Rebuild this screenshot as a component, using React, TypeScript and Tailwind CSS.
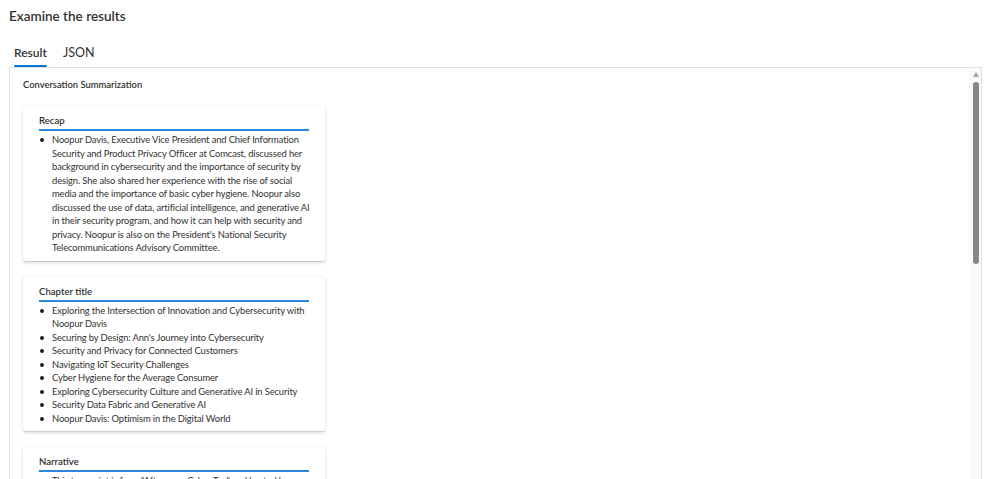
const recap = [
  [
    "Noopur Davis, Executive Vice President and Chief Information",
    "Security and Product Privacy Officer at Comcast, discussed her",
    "background in cybersecurity and the importance of security by",
    "design. She also shared her experience with the rise of social",
    "media and the importance of basic cyber hygiene. Noopur also",
    "discussed the use of data, artificial intelligence, and generative AI",
    "in their security program, and how it can help with security and",
    "privacy. Noopur is also on the President's National Security",
    "Telecommunications Advisory Committee.",
  ],
];

const chapters = [
  ["Exploring the Intersection of Innovation and Cybersecurity with", "Noopur Davis"],
  ["Securing by Design: Ann's Journey into Cybersecurity"],
  ["Security and Privacy for Connected Customers"],
  ["Navigating IoT Security Challenges"],
  ["Cyber Hygiene for the Average Consumer"],
  ["Exploring Cybersecurity Culture and Generative AI in Security"],
  ["Security Data Fabric and Generative AI"],
  ["Noopur Davis: Optimism in the Digital World"],
];

const narrative = [
  [
    'This transcript is from "Afternoon Cyber Tea" and hosted by',
    "Ann Johnson, featuring Noopur Davis, who discusses her journey",
    "into cybersecurity and the importance of security by design.",
  ],
];

function Card({ title, items }: { title: string; items: string[][] }) {
  return (
    <div className="w-[302px] shrink-0 rounded-[2px] bg-white px-4 pt-[8px] pb-[6px] shadow-[0_1.6px_3.6px_rgba(0,0,0,0.13),0_0.3px_0.9px_rgba(0,0,0,0.11)]">
      <h3 className="border-b-2 border-[#2b88d8] pb-[1px] text-[9.6px] font-semibold leading-[14px] text-[#323130]">
        {title}
      </h3>
      <ul className="mt-[2px] flex flex-col text-[9.4px] leading-[13.5px] tracking-[-0.12px] text-[#323130]">
        {items.map((lines) => (
          <li key={lines[0]} className="flex whitespace-nowrap">
            <span className="ml-[1px] mr-[8px] mt-[5px] h-[4px] w-[4px] shrink-0 rounded-full bg-[#201f1e]" />
            <span>
              {lines.map((l, i) => (
                <span key={l}>
                  {i > 0 && <br />}
                  {l}
                </span>
              ))}
            </span>
          </li>
        ))}
      </ul>
    </div>
  );
}

export default function App() {
  return (
    <div
      className="h-[479px] overflow-hidden bg-white text-[#323130]"
      style={{ fontFamily: 'Lato, "Open Sans", sans-serif' }}
    >
      <div className="px-[9px] pt-[6px]">
        <h1 className="text-[13.5px] font-semibold leading-[20px] text-[#323130]">Examine the results</h1>

        <div className="mt-[18px] flex gap-4 pl-[5px]">
          <div className="flex flex-col items-center">
            <span className="text-[12px] font-semibold leading-[18px] text-[#323130]">Result</span>
            <span className="mt-[3px] h-[2px] w-full rounded-full bg-[#0078d4]" />
          </div>
          <div className="flex flex-col">
            <span className="text-[12.5px] leading-[18px] text-[#323130]">JSON</span>
          </div>
        </div>

        <div className="flex h-[430px] w-[973px] border border-[#e1dfdd]">
          <div className="flex flex-1 flex-col overflow-hidden pl-[13px] pt-[9px]">
            <h2 className="text-[9.4px] font-semibold leading-[16px] text-[#323130]">Conversation Summarization</h2>
            <div className="mt-[13px] flex flex-col gap-4">
              <Card title="Recap" items={recap} />
              <Card title="Chapter title" items={chapters} />
              <Card title="Narrative" items={narrative} />
            </div>
          </div>
          <div className="flex w-[12px] flex-col items-center bg-[#fafafa] pt-[4px]">
            <svg width="6" height="5" viewBox="0 0 6 5" className="ml-[1px]">
              <polygon points="3,0 6,5 0,5" fill="#a3a3a3" />
            </svg>
            <div className="ml-[1px] mt-[5px] h-[182px] w-[6px] rounded-[3px] bg-[#868686]" />
          </div>
        </div>
      </div>
    </div>
  );
}
